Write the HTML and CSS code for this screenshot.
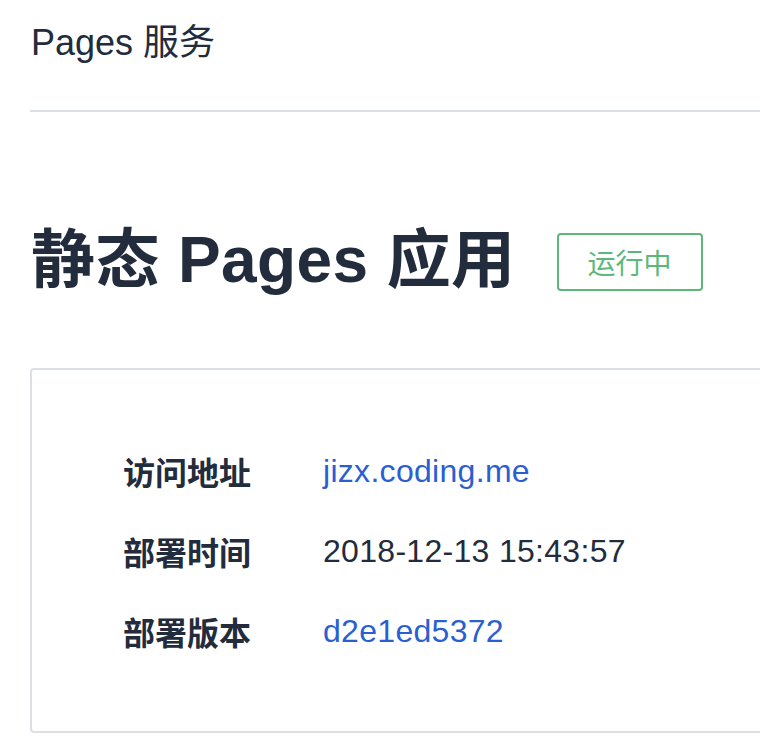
FILE: index.html
```html
<!DOCTYPE html>
<html lang="zh-CN">
<head>
<meta charset="utf-8">
<title>Pages 服务</title>
<link rel="stylesheet" href="styles.css">
</head>
<body>
<div class="page">
  <header class="header">Pages 服务</header>
  <div class="title-row">
    <h1 class="title">静态 Pages 应用</h1>
    <span class="badge">运行中</span>
  </div>
  <section class="card">
    <div class="row">
      <span class="label">访问地址</span>
      <a class="value link" href="#">jizx.coding.me</a>
    </div>
    <div class="row">
      <span class="label">部署时间</span>
      <span class="value">2018-12-13 15:43:57</span>
    </div>
    <div class="row">
      <span class="label">部署版本</span>
      <a class="value link" href="#">d2e1ed5372</a>
    </div>
  </section>
</div>
</body>
</html>
```

FILE: styles.css
```css
html, body {
  margin: 0;
  padding: 0;
  background: #ffffff;
}

body {
  font-family: "Liberation Sans", "Noto Sans CJK SC", sans-serif;
  color: #222c3c;
  overflow: hidden;
}

.page {
  padding-left: 30px;
  overflow: hidden;
}

.header {
  font-size: 36px;
  line-height: 36px;
  padding: 25px 0 49px 1px;
  border-bottom: 2px solid #dcdfe6;
  color: #222c3c;
}

.title-row {
  display: flex;
  align-items: center;
  margin-top: 112px;
  height: 72px;
}

.title {
  margin: 0 41px 0 1px;
  font-size: 64px;
  line-height: 72px;
  font-weight: 700;
  letter-spacing: 0.4px;
  color: #222c3c;
}

.badge {
  box-sizing: border-box;
  width: 146px;
  height: 58px;
  border: 2px solid #5cb87a;
  border-radius: 4px;
  color: #5cb87a;
  font-size: 28px;
  display: flex;
  align-items: center;
  justify-content: center;
  margin-top: 4px;
}

.card {
  margin-top: 72px;
  margin-right: -20px;
  border: 2px solid #dcdfe6;
  border-radius: 4px;
  padding: 61px 0 60px 91px;
}

.row {
  display: flex;
  align-items: center;
  height: 80px;
  font-size: 32px;
}

.label {
  width: 200px;
  font-weight: 700;
  color: #222c3c;
}

.value {
  color: #222c3c;
  letter-spacing: 0.3px;
}

.link {
  color: #2a5fd2;
  text-decoration: none;
}
```
